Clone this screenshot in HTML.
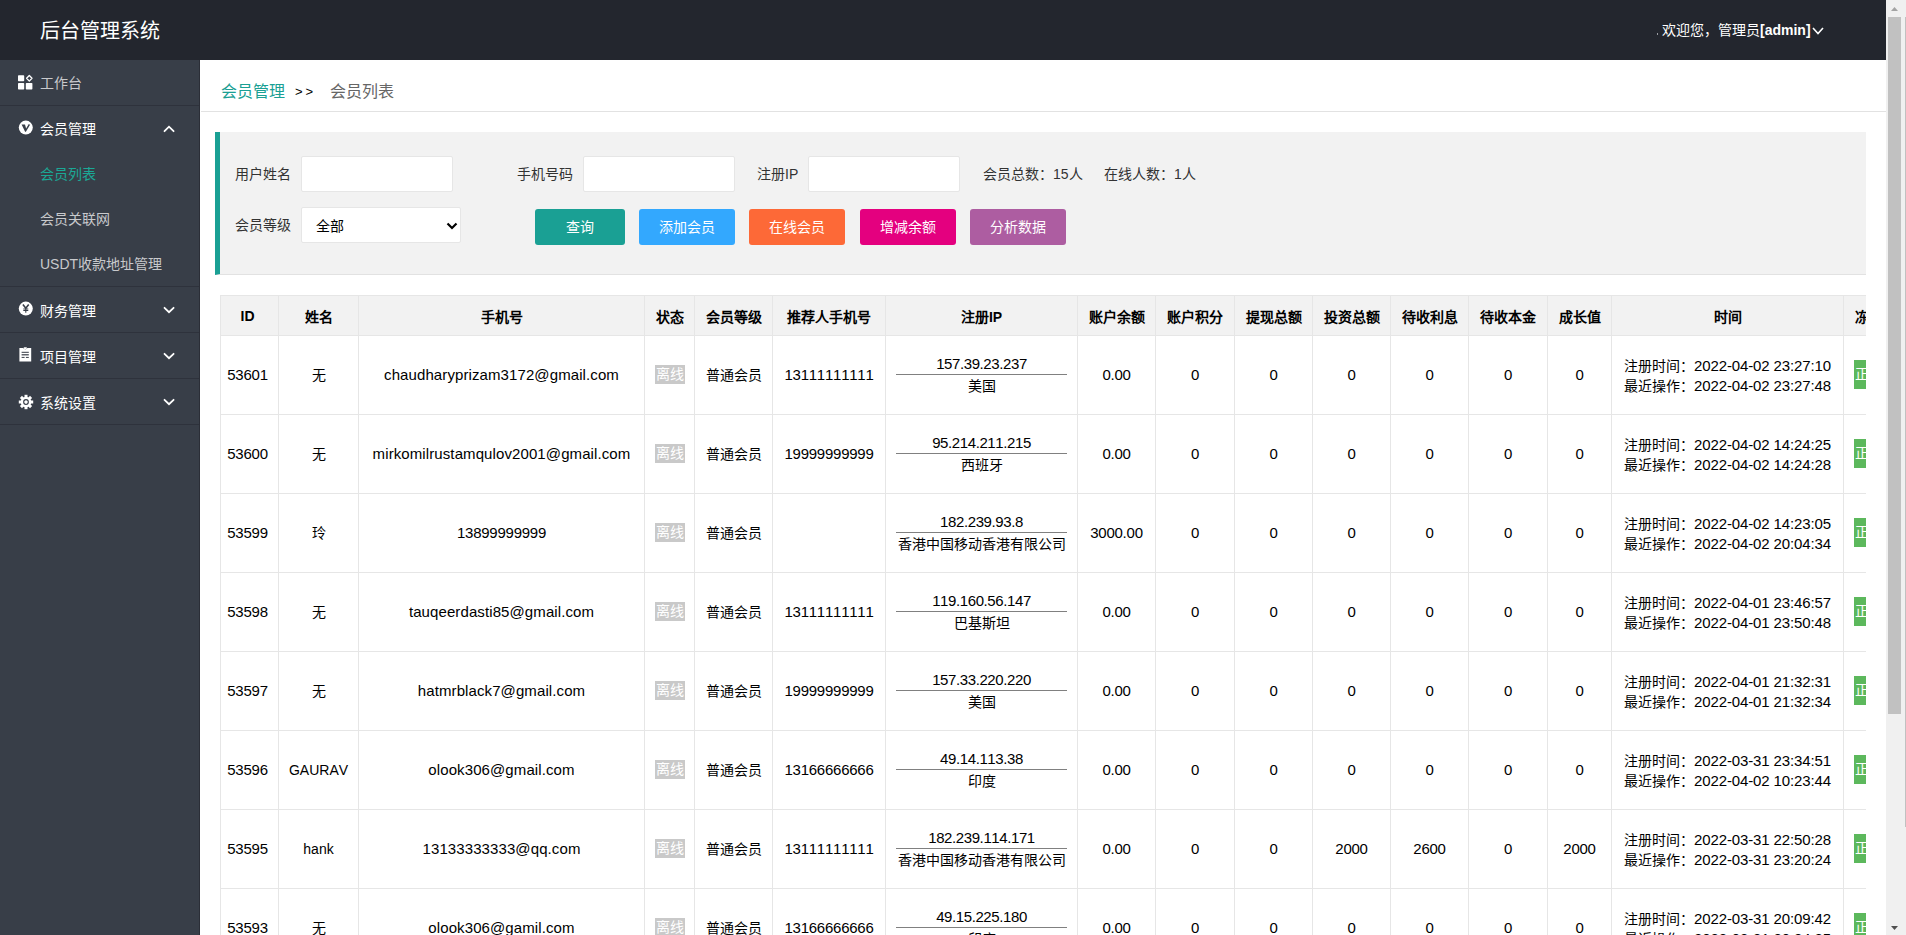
<!DOCTYPE html>
<html lang="zh-CN"><head><meta charset="utf-8"><title>后台管理系统</title>
<style>
*{box-sizing:border-box;margin:0;padding:0}
html,body{width:1906px;height:935px;overflow:hidden;background:#fff}
body{font-family:"Liberation Sans",sans-serif;font-size:14px;color:#000;font-kerning:none;position:relative}
.abs{position:absolute}
#hdr{position:absolute;left:0;top:0;width:1886px;height:60px;background:#23262e}
#hdr .title{position:absolute;left:40px;top:17px;font-size:20px;line-height:28px;color:#fff;white-space:nowrap}
#hdr .wel{position:absolute;left:1662px;top:21px;line-height:18px;color:#fff;white-space:nowrap;font-weight:500}
#hdr .dot{position:absolute;left:1657px;top:33px;width:1px;height:2px;background:#9a9ca2}
#side{position:absolute;left:0;top:60px;width:200px;height:875px;background:#383e48;border-right:1px solid #2b2e37}
.sep{position:absolute;left:0;width:199px;height:1px;background:#2e323c}
.nav{position:absolute;left:40px;line-height:20px;white-space:nowrap;color:#fff;font-weight:500}
.nav.l{color:#c8c9cc;font-weight:normal}
.nav.sub{color:#c8c9cc;font-weight:normal}
.nav.act{color:#1ba896;font-weight:normal}
#main{position:absolute;left:200px;top:60px;width:1686px;height:875px;background:#fff;overflow:hidden}
.crumb{position:absolute;left:21px;top:22px;line-height:20px;font-size:16px;white-space:nowrap}
.crumb .a{color:#1aa094}
.crumb .s{position:absolute;left:74px;top:0;font-size:13px;color:#000;letter-spacing:3px}
.crumb .c{position:absolute;left:109px;top:0;color:#666}
.crumbline{position:absolute;left:1px;top:51px;width:1685px;height:1px;background:#e2e2e2}
.quote{position:absolute;left:15px;top:72px;width:1651px;height:143px;background:#f2f2f2;border-left:5px solid #1aa094;border-bottom:1px solid #e2e2e2}
.lbl{position:absolute;line-height:20px;color:#333;white-space:nowrap}
.inp{position:absolute;height:36px;background:#fff;border:1px solid #e6e6e6;border-radius:2px}
.btn{position:absolute;top:77px;height:36px;border-radius:3px;color:#fff;text-align:center;line-height:36px;white-space:nowrap}
#tw{position:absolute;left:20px;top:235px;width:1646px;height:640px;overflow:hidden}
table{border-collapse:separate;border-spacing:0;table-layout:fixed;width:1723px;border-top:1px solid #e6e6e6;border-left:1px solid #e6e6e6}
th,td{border-right:1px solid #e6e6e6;border-bottom:1px solid #e6e6e6;text-align:center;white-space:nowrap;padding:0;overflow:visible}
th{height:40px;background:#f2f2f2;font-weight:bold;color:#000}
td{height:79px;color:#000;line-height:20px}
.em{font-size:15px;letter-spacing:0.1px}
.dg{font-size:15px;letter-spacing:-0.25px}
.ip .dg{letter-spacing:-0.4px}
.dt{font-size:15px;letter-spacing:-0.12px}
.off{display:inline-block;background:#c9c9c9;color:#fff;line-height:19px;height:19px;padding:0 1px;position:relative;top:-1px}
.ipc{padding:0 10px}
.ip{line-height:18px;height:19px}
.hr{height:1px;background:#808080;margin:0}
.ct{line-height:22px;height:21px}
.tm{text-align:left;padding-left:12px}
.tm div{line-height:19px;position:relative;top:1px}
.lastc{text-align:left;padding-left:10px}
.idc{padding-right:4px}
th.lastc{padding-left:11px}
.ok{display:inline-block;background:#5cb85c;color:#fff;height:29px;line-height:29px;padding:0 1px;position:relative;top:-1px}
#sb{position:absolute;left:1886px;top:0;width:20px;height:935px;background:#f0f0f0}
</style></head><body>
<div id="hdr">
  <div class="title">后台管理系统</div>
  <div class="dot"></div>
  <div class="wel">欢迎您，管理员<span style="font-weight:700">[admin]</span></div>
  <svg class="abs" style="left:1811px;top:25px" width="14" height="12" viewBox="0 0 14 12"><polyline points="2,3 7,8.5 12,3" fill="none" stroke="#fff" stroke-width="1.6"/></svg>
</div>
<div id="side">
  <!-- 工作台 -->
  <svg class="abs" style="left:17px;top:14px" width="16" height="16" viewBox="0 0 16 16"><rect x="1" y="1.2" width="6.2" height="6.1" rx="0.7" fill="#fff"/><path d="M12.3 1.5 L15.0 4.3 L12.3 7.1 L9.6 4.3 Z" fill="none" stroke="#fff" stroke-width="1.3" stroke-linejoin="round"/><rect x="1" y="9" width="6.2" height="6.5" rx="0.7" fill="#fff"/><rect x="8.8" y="9" width="6.6" height="6.5" rx="0.7" fill="#fff"/></svg>
  <div class="nav l" style="top:13px">工作台</div>
  <div class="sep" style="top:45px"></div>
  <!-- 会员管理 -->
  <svg class="abs" style="left:18px;top:60px" width="16" height="16" viewBox="0 0 16 16"><circle cx="7.8" cy="7.6" r="7" fill="#fff"/><path d="M3.6 4.4 L7.0 4.4 L8.1 8.6 L10.2 5.0 L9.6 4.4 L12.2 4.4 L7.9 11.8 L7.1 11.8 Z" fill="#383e48"/></svg>
  <div class="nav" style="top:59px">会员管理</div>
  <svg class="abs" style="left:160px;top:60px" width="18" height="16" viewBox="0 0 18 16"><polyline points="4.5,11.2 9,6.7 13.6,11.2" fill="none" stroke="#fff" stroke-width="1.8" stroke-linecap="round"/></svg>
  <div class="nav act" style="top:104px">会员列表</div>
  <div class="nav sub" style="top:149px">会员关联网</div>
  <div class="nav sub" style="top:194px">USDT收款地址管理</div>
  <div class="sep" style="top:226px"></div>
  <!-- 财务管理 -->
  <svg class="abs" style="left:18px;top:241px" width="16" height="16" viewBox="0 0 16 16"><circle cx="7.8" cy="7.6" r="7" fill="#fff"/><path d="M4.9 3.6 L7.8 7.3 L10.7 3.6" fill="none" stroke="#383e48" stroke-width="1.6"/><path d="M7.8 7.3 V11.8 M5.3 8 H10.3 M5.3 9.5 H10.3" fill="none" stroke="#383e48" stroke-width="1.1"/></svg>
  <div class="nav" style="top:241px">财务管理</div>
  <svg class="abs" style="left:160px;top:241px" width="18" height="16" viewBox="0 0 18 16"><polyline points="4.5,6.8 9,11.2 13.6,6.8" fill="none" stroke="#fff" stroke-width="1.8" stroke-linecap="round"/></svg>
  <div class="sep" style="top:272px"></div>
  <!-- 项目管理 -->
  <svg class="abs" style="left:18px;top:287px" width="16" height="16" viewBox="0 0 16 16"><path d="M1.4 0.9 H5.2 Q6 2.3 7.3 2.3 Q8.6 2.3 9.4 0.9 H13.2 V14.5 H1.4 Z" fill="#fff"/><rect x="5.6" y="0.3" width="3.4" height="1.6" rx="0.8" fill="#fff"/><rect x="3.6" y="4.8" width="7.2" height="1" fill="#383e48"/><rect x="3.6" y="7.2" width="7.2" height="1.2" fill="#383e48"/><rect x="3.6" y="9.9" width="3" height="1" fill="#383e48"/><rect x="7.9" y="9.9" width="2.9" height="1" fill="#383e48"/></svg>
  <div class="nav" style="top:287px">项目管理</div>
  <svg class="abs" style="left:160px;top:287px" width="18" height="16" viewBox="0 0 18 16"><polyline points="4.5,6.8 9,11.2 13.6,6.8" fill="none" stroke="#fff" stroke-width="1.8" stroke-linecap="round"/></svg>
  <div class="sep" style="top:318px"></div>
  <!-- 系统设置 -->
  <svg class="abs" style="left:18px;top:334px" width="16" height="16" viewBox="-8 -8 16 16"><g fill="#fff"><circle r="5.3"/><g><rect x="-1.5" y="-7.2" width="3" height="3" /><rect x="-1.5" y="4.2" width="3" height="3"/><rect x="-7.2" y="-1.5" width="3" height="3"/><rect x="4.2" y="-1.5" width="3" height="3"/></g><g transform="rotate(45)"><rect x="-1.5" y="-7.2" width="3" height="3" /><rect x="-1.5" y="4.2" width="3" height="3"/><rect x="-7.2" y="-1.5" width="3" height="3"/><rect x="4.2" y="-1.5" width="3" height="3"/></g></g><circle r="2.3" fill="none" stroke="#383e48" stroke-width="1.2"/></svg>
  <div class="nav" style="top:333px">系统设置</div>
  <svg class="abs" style="left:160px;top:333px" width="18" height="16" viewBox="0 0 18 16"><polyline points="4.5,6.8 9,11.2 13.6,6.8" fill="none" stroke="#fff" stroke-width="1.8" stroke-linecap="round"/></svg>
  <div class="sep" style="top:364px"></div>
</div>
<div id="main">
  <div class="crumb"><span class="a">会员管理</span><span class="s">&gt;&gt;</span><span class="c">会员列表</span></div>
  <div class="crumbline"></div>
  <div class="quote">
    <div class="lbl" style="left:15px;top:32px">用户姓名</div>
    <div class="inp" style="left:81px;top:24px;width:152px"></div>
    <div class="lbl" style="left:297px;top:32px">手机号码</div>
    <div class="inp" style="left:363px;top:24px;width:152px"></div>
    <div class="lbl" style="left:537px;top:32px">注册IP</div>
    <div class="inp" style="left:588px;top:24px;width:152px"></div>
    <div class="lbl" style="left:763px;top:32px">会员总数：15人</div>
    <div class="lbl" style="left:884px;top:32px">在线人数：1人</div>
    <div class="lbl" style="left:15px;top:83px">会员等级</div>
    <div class="inp" style="left:81px;top:75px;width:160px"><span style="position:absolute;left:14px;top:9px;line-height:18px;color:#000">全部</span>
      <svg class="abs" style="left:143px;top:13px" width="14" height="10" viewBox="0 0 14 10"><polyline points="2.5,2.5 7,7 11.5,2.5" fill="none" stroke="#000" stroke-width="2.2"/></svg></div>
    <div class="btn" style="left:315px;width:90px;background:#1aa094">查询</div>
    <div class="btn" style="left:419px;width:96px;background:#33a8fe">添加会员</div>
    <div class="btn" style="left:529px;width:96px;background:#fd6937">在线会员</div>
    <div class="btn" style="left:640px;width:96px;background:#e4007f">增减余额</div>
    <div class="btn" style="left:750px;width:96px;background:#ad5da1">分析数据</div>
  </div>
  <div id="tw"><table><colgroup><col style="width:58px"><col style="width:80px"><col style="width:286px"><col style="width:50px"><col style="width:78px"><col style="width:113px"><col style="width:192px"><col style="width:78px"><col style="width:79px"><col style="width:78px"><col style="width:78px"><col style="width:78px"><col style="width:79px"><col style="width:64px"><col style="width:232px"><col style="width:100px"></colgroup><thead><tr><th class="idc">ID</th><th>姓名</th><th>手机号</th><th>状态</th><th>会员等级</th><th>推荐人手机号</th><th>注册IP</th><th>账户余额</th><th>账户积分</th><th>提现总额</th><th>投资总额</th><th>待收利息</th><th>待收本金</th><th>成长值</th><th>时间</th><th class="lastc">冻结</th></tr></thead><tbody>
<tr><td class="idc"><span class="dg">53601</span></td><td><span class="nm">无</span></td><td><span class="em">chaudharyprizam3172@gmail.com</span></td><td><span class="off">离线</span></td><td>普通会员</td><td><span class="dg">13111111111</span></td><td class="ipc"><div class="ip"><span class="dg">157.39.23.237</span></div><div class="hr"></div><div class="ct">美国</div></td><td><span class="dg">0.00</span></td><td><span class="dg">0</span></td><td><span class="dg">0</span></td><td><span class="dg">0</span></td><td><span class="dg">0</span></td><td><span class="dg">0</span></td><td><span class="dg">0</span></td><td class="tm"><div>注册时间：<span class="dt">2022-04-02 23:27:10</span></div><div>最近操作：<span class="dt">2022-04-02 23:27:48</span></div></td><td class="lastc"><span class="ok">正常</span></td></tr>
<tr><td class="idc"><span class="dg">53600</span></td><td><span class="nm">无</span></td><td><span class="em">mirkomilrustamqulov2001@gmail.com</span></td><td><span class="off">离线</span></td><td>普通会员</td><td><span class="dg">19999999999</span></td><td class="ipc"><div class="ip"><span class="dg">95.214.211.215</span></div><div class="hr"></div><div class="ct">西班牙</div></td><td><span class="dg">0.00</span></td><td><span class="dg">0</span></td><td><span class="dg">0</span></td><td><span class="dg">0</span></td><td><span class="dg">0</span></td><td><span class="dg">0</span></td><td><span class="dg">0</span></td><td class="tm"><div>注册时间：<span class="dt">2022-04-02 14:24:25</span></div><div>最近操作：<span class="dt">2022-04-02 14:24:28</span></div></td><td class="lastc"><span class="ok">正常</span></td></tr>
<tr><td class="idc"><span class="dg">53599</span></td><td><span class="nm">玲</span></td><td><span class="dg">13899999999</span></td><td><span class="off">离线</span></td><td>普通会员</td><td><span class="dg"></span></td><td class="ipc"><div class="ip"><span class="dg">182.239.93.8</span></div><div class="hr"></div><div class="ct">香港中国移动香港有限公司</div></td><td><span class="dg">3000.00</span></td><td><span class="dg">0</span></td><td><span class="dg">0</span></td><td><span class="dg">0</span></td><td><span class="dg">0</span></td><td><span class="dg">0</span></td><td><span class="dg">0</span></td><td class="tm"><div>注册时间：<span class="dt">2022-04-02 14:23:05</span></div><div>最近操作：<span class="dt">2022-04-02 20:04:34</span></div></td><td class="lastc"><span class="ok">正常</span></td></tr>
<tr><td class="idc"><span class="dg">53598</span></td><td><span class="nm">无</span></td><td><span class="em">tauqeerdasti85@gmail.com</span></td><td><span class="off">离线</span></td><td>普通会员</td><td><span class="dg">13111111111</span></td><td class="ipc"><div class="ip"><span class="dg">119.160.56.147</span></div><div class="hr"></div><div class="ct">巴基斯坦</div></td><td><span class="dg">0.00</span></td><td><span class="dg">0</span></td><td><span class="dg">0</span></td><td><span class="dg">0</span></td><td><span class="dg">0</span></td><td><span class="dg">0</span></td><td><span class="dg">0</span></td><td class="tm"><div>注册时间：<span class="dt">2022-04-01 23:46:57</span></div><div>最近操作：<span class="dt">2022-04-01 23:50:48</span></div></td><td class="lastc"><span class="ok">正常</span></td></tr>
<tr><td class="idc"><span class="dg">53597</span></td><td><span class="nm">无</span></td><td><span class="em">hatmrblack7@gmail.com</span></td><td><span class="off">离线</span></td><td>普通会员</td><td><span class="dg">19999999999</span></td><td class="ipc"><div class="ip"><span class="dg">157.33.220.220</span></div><div class="hr"></div><div class="ct">美国</div></td><td><span class="dg">0.00</span></td><td><span class="dg">0</span></td><td><span class="dg">0</span></td><td><span class="dg">0</span></td><td><span class="dg">0</span></td><td><span class="dg">0</span></td><td><span class="dg">0</span></td><td class="tm"><div>注册时间：<span class="dt">2022-04-01 21:32:31</span></div><div>最近操作：<span class="dt">2022-04-01 21:32:34</span></div></td><td class="lastc"><span class="ok">正常</span></td></tr>
<tr><td class="idc"><span class="dg">53596</span></td><td><span class="nm">GAURAV</span></td><td><span class="em">olook306@gmail.com</span></td><td><span class="off">离线</span></td><td>普通会员</td><td><span class="dg">13166666666</span></td><td class="ipc"><div class="ip"><span class="dg">49.14.113.38</span></div><div class="hr"></div><div class="ct">印度</div></td><td><span class="dg">0.00</span></td><td><span class="dg">0</span></td><td><span class="dg">0</span></td><td><span class="dg">0</span></td><td><span class="dg">0</span></td><td><span class="dg">0</span></td><td><span class="dg">0</span></td><td class="tm"><div>注册时间：<span class="dt">2022-03-31 23:34:51</span></div><div>最近操作：<span class="dt">2022-04-02 10:23:44</span></div></td><td class="lastc"><span class="ok">正常</span></td></tr>
<tr><td class="idc"><span class="dg">53595</span></td><td><span class="nm">hank</span></td><td><span class="em">13133333333@qq.com</span></td><td><span class="off">离线</span></td><td>普通会员</td><td><span class="dg">13111111111</span></td><td class="ipc"><div class="ip"><span class="dg">182.239.114.171</span></div><div class="hr"></div><div class="ct">香港中国移动香港有限公司</div></td><td><span class="dg">0.00</span></td><td><span class="dg">0</span></td><td><span class="dg">0</span></td><td><span class="dg">2000</span></td><td><span class="dg">2600</span></td><td><span class="dg">0</span></td><td><span class="dg">2000</span></td><td class="tm"><div>注册时间：<span class="dt">2022-03-31 22:50:28</span></div><div>最近操作：<span class="dt">2022-03-31 23:20:24</span></div></td><td class="lastc"><span class="ok">正常</span></td></tr>
<tr><td class="idc"><span class="dg">53593</span></td><td><span class="nm">无</span></td><td><span class="em">olook306@gamil.com</span></td><td><span class="off">离线</span></td><td>普通会员</td><td><span class="dg">13166666666</span></td><td class="ipc"><div class="ip"><span class="dg">49.15.225.180</span></div><div class="hr"></div><div class="ct">印度</div></td><td><span class="dg">0.00</span></td><td><span class="dg">0</span></td><td><span class="dg">0</span></td><td><span class="dg">0</span></td><td><span class="dg">0</span></td><td><span class="dg">0</span></td><td><span class="dg">0</span></td><td class="tm"><div>注册时间：<span class="dt">2022-03-31 20:09:42</span></div><div>最近操作：<span class="dt">2022-03-31 20:34:35</span></div></td><td class="lastc"><span class="ok">正常</span></td></tr>
</tbody></table></div>
</div>
<div id="sb">
  <svg class="abs" style="left:0;top:0" width="20" height="935" viewBox="0 0 20 935">
    <rect x="0" y="0" width="20" height="935" fill="#f0f0f0"/>
    <polygon points="5,11 8.5,7 12,11" fill="#a3a3a3"/>
    <rect x="2" y="17" width="13" height="697" fill="#c1c1c1"/>
    <rect x="19" y="17" width="1" height="810" fill="#c1c1c1"/>
    <polygon points="5,926 12,926 8.5,930" fill="#505050"/>
  </svg>
</div>
</body></html>
